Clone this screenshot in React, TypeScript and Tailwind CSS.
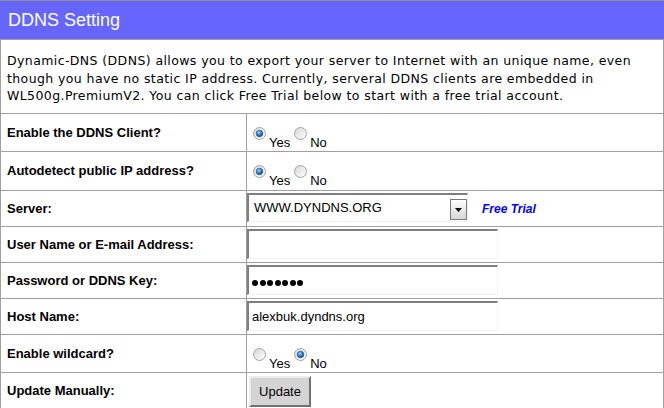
import React from "react";

interface RowProps {
  label: string;
  className: string;
  children: React.ReactNode;
}

function Row({ label, className, children }: RowProps): React.JSX.Element {
  return (
    <div className={`flex border-b border-[#a0a0a0] ${className}`}>
      <div className="w-[246px] shrink-0 border-r border-[#a0a0a0] flex items-center pl-[6px] text-[13px] font-bold text-black">
        {label}
      </div>
      <div className="flex-1 min-w-0 flex items-start">{children}</div>
    </div>
  );
}

function Radio({ checked, id }: { checked: boolean; id: string }): React.JSX.Element {
  return (
    <svg width="13" height="13" viewBox="0 0 13 13" className="shrink-0">
      <defs>
        <linearGradient id={`rb-${id}`} x1="0" y1="0" x2="1" y2="1">
          <stop offset="0" stopColor="#d6d6d6" />
          <stop offset="1" stopColor="#ffffff" />
        </linearGradient>
        <radialGradient id={`rd-${id}`} cx="0.4" cy="0.35" r="0.7">
          <stop offset="0" stopColor="#9fd3ff" />
          <stop offset="0.55" stopColor="#2c7fc6" />
          <stop offset="1" stopColor="#0b3e72" />
        </radialGradient>
      </defs>
      <circle cx="6.5" cy="6.5" r="6" fill={`url(#rb-${id})`} stroke="#a3a3a3" strokeWidth="1" />
      {checked && <circle cx="6.5" cy="6.5" r="3.3" fill={`url(#rd-${id})`} stroke="#1d4f7e" strokeWidth="0.6" />}
    </svg>
  );
}

function YesNo({ yes, id }: { yes: boolean; id: string }): React.JSX.Element {
  return (
    <div className="flex items-start pt-[13px] pl-[6px] text-[13px] text-black">
      <Radio checked={yes} id={`${id}-y`} />
      <span className="ml-[3px] mt-[8px] leading-[15px]">Yes</span>
      <span className="ml-[4px]">
        <Radio checked={!yes} id={`${id}-n`} />
      </span>
      <span className="ml-[3px] mt-[8px] leading-[15px]">No</span>
    </div>
  );
}

function TextBox({ children }: { children?: React.ReactNode }): React.JSX.Element {
  return (
    <div className="mt-[2px] w-[251px] h-[30px] bg-white border-t-2 border-l-2 border-r border-b border-t-[#7f7f7f] border-l-[#7f7f7f] border-r-[#f2f2f2] border-b-[#f2f2f2] flex items-center pl-[3px] text-[13px] text-black">
      {children}
    </div>
  );
}

export default function App(): React.JSX.Element {
  return (
    <div className="w-[664px] h-[408px] overflow-hidden bg-white font-['Liberation_Sans',Arial,sans-serif]">
      {/* title bar */}
      <div className="h-[40px] bg-[#6666ff] border-t border-b border-t-[#8c8c8c] border-b-[#a0a0a0] flex items-center pl-2 text-[18px] text-white">
        DDNS Setting
      </div>

      <div className="border-l border-r border-[#a0a0a0]">
        {/* intro */}
        <div className="h-[74px] border-b border-[#a0a0a0] pt-[12px] pl-[6px] font-['DejaVu_Sans',Verdana,sans-serif] text-[12.5px] tracking-[0.4px] leading-[17.5px] text-black whitespace-nowrap">
          <div>Dynamic-DNS (DDNS) allows you to export your server to Internet with an unique name, even</div>
          <div>though you have no static IP address. Currently, serveral DDNS clients are embedded in</div>
          <div>WL500g.PremiumV2. You can click Free Trial below to start with a free trial account.</div>
        </div>

        <Row label="Enable the DDNS Client?" className="h-[38px]">
          <YesNo yes id="ddns" />
        </Row>

        <Row label="Autodetect public IP address?" className="h-[39px]">
          <YesNo yes id="auto" />
        </Row>

        <Row label="Server:" className="h-[36px]">
          <div className="mt-[2px] w-[221px] h-[29px] bg-white border-t-2 border-l-2 border-r border-b border-t-[#7f7f7f] border-l-[#7f7f7f] border-r-[#f2f2f2] border-b-[#f2f2f2] flex items-start">
            <span className="flex-1 self-center pl-[5px] text-[13px] text-black">WWW.DYNDNS.ORG</span>
            <div className="mt-[4px] w-[17px] h-[21px] border border-[#7a7a7a] bg-gradient-to-b from-[#ffffff] to-[#d6d6d6] flex items-center justify-center">
              <svg width="7" height="4" viewBox="0 0 7 4">
                <path d="M0 0 L7 0 L3.5 4 Z" fill="#000" />
              </svg>
            </div>
          </div>
          <span className="ml-[14px] self-center text-[12px] font-bold italic text-[#0000ff]">Free Trial</span>
        </Row>

        <Row label="User Name or E-mail Address:" className="h-[36px]">
          <TextBox />
        </Row>

        <Row label="Password or DDNS Key:" className="h-[36px]">
          <TextBox>
            <div className="flex gap-[1.5px] mt-[4px]">
              {Array.from({ length: 7 }).map((_, i) => (
                <span key={i} className="w-[6px] h-[6px] rounded-full bg-black" />
              ))}
            </div>
          </TextBox>
        </Row>

        <Row label="Host Name:" className="h-[36px]">
          <TextBox>alexbuk.dyndns.org</TextBox>
        </Row>

        <Row label="Enable wildcard?" className="h-[38px]">
          <YesNo yes={false} id="wild" />
        </Row>

        <Row label="Update Manually:" className="h-[36px]">
          <button className="ml-[2px] mt-[3px] w-[62px] h-[31px] bg-[#d4d4d4] border-2 border-t-[#ececec] border-l-[#ececec] border-r-[#707070] border-b-[#707070] text-[13px] text-black">
            Update
          </button>
        </Row>
      </div>
    </div>
  );
}
